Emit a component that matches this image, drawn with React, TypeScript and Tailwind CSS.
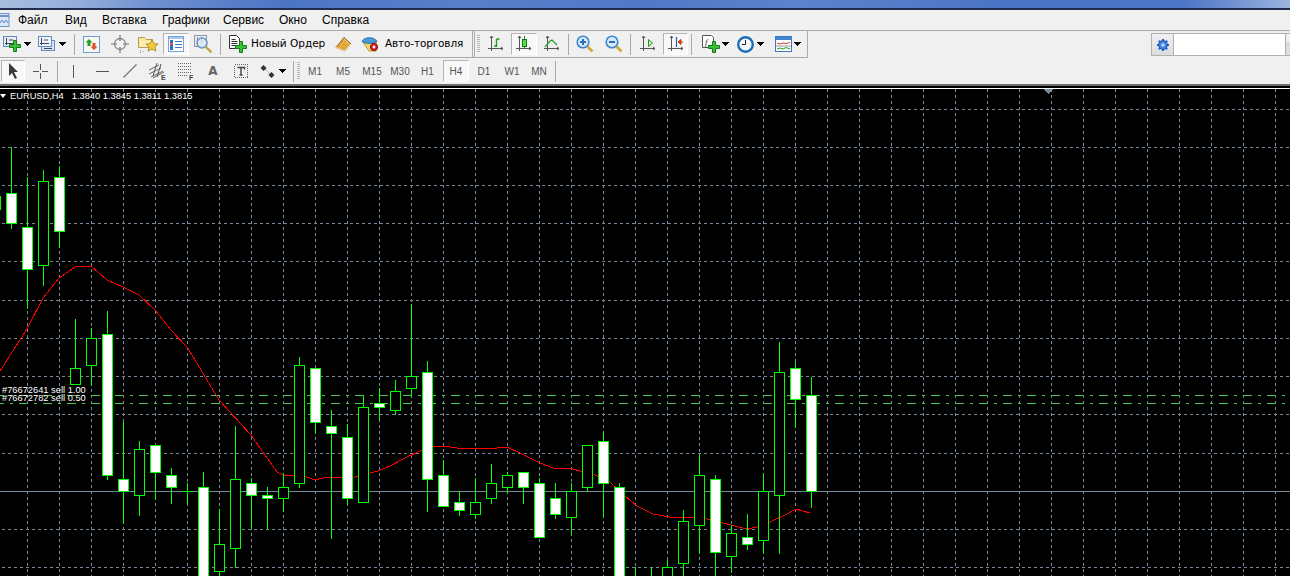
import React from "react";

type C = [number, number, number, number, number, number];
// x, wickTop, wickBottom, bodyTop, bodyBottom, filled
const candles: C[] = [
  [-5, 180, 230, 196, 209, 0],
  [11, 147, 228, 193, 223, 1],
  [27, 177, 308, 227, 269, 1],
  [43, 170, 285, 181, 265, 0],
  [59, 166, 247, 177, 231, 1],
  [75, 319, 384, 368, 384, 0],
  [91, 328, 385, 338, 365, 0],
  [107, 311, 479, 334, 475, 1],
  [123, 422, 523, 479, 491, 1],
  [139, 441, 515, 449, 495, 0],
  [155, 445, 499, 445, 472, 1],
  [171, 468, 503, 475, 487, 1],
  [203, 472, 580, 487, 580, 1],
  [219, 509, 580, 544, 571, 0],
  [235, 426, 567, 479, 548, 0],
  [251, 478, 528, 483, 495, 1],
  [267, 487, 529, 495, 498, 1],
  [283, 473, 511, 487, 498, 0],
  [299, 357, 487, 365, 483, 0],
  [315, 368, 433, 368, 422, 1],
  [331, 410, 538, 426, 433, 1],
  [347, 424, 504, 437, 498, 1],
  [363, 395, 502, 407, 502, 0],
  [379, 388, 419, 403, 407, 1],
  [395, 380, 414, 391, 410, 0],
  [411, 304, 395, 376, 388, 0],
  [427, 361, 511, 372, 479, 1],
  [443, 460, 506, 475, 506, 1],
  [459, 491, 515, 502, 510, 1],
  [475, 478, 518, 502, 514, 0],
  [491, 464, 503, 483, 498, 0],
  [507, 472, 493, 475, 487, 0],
  [523, 472, 503, 472, 487, 1],
  [539, 478, 537, 483, 537, 1],
  [555, 483, 518, 498, 514, 1],
  [571, 483, 534, 491, 517, 0],
  [587, 445, 491, 445, 487, 0],
  [603, 432, 517, 441, 483, 1],
  [619, 483, 580, 487, 580, 1],
  [667, 560, 580, 567, 580, 0],
  [683, 510, 580, 521, 563, 0],
  [699, 454, 553, 475, 525, 0],
  [715, 475, 580, 479, 552, 1],
  [731, 525, 572, 533, 556, 0],
  [747, 514, 549, 537, 544, 1],
  [763, 473, 553, 491, 540, 0],
  [779, 342, 553, 372, 495, 0],
  [795, 362, 427, 368, 399, 1],
  [811, 377, 507, 395, 491, 1],
];

const red =
  "0,371 7,360 27,329 43,298 59,278 75,267 91,266 107,280 123,287 139,295 155,310 171,330 187,347 195,360 219,400 251,435 277,472 283,475 292,475 307,477 315,480 323,478 330,477 340,477 355,477 370,473 378,471 390,466 403,459 420,451 433,447 443,446 457,448 497,448 507,447 520,453 540,463 553,468 573,469 580,471 593,474 610,482 625,496 637,506 653,514 670,517 687,518 693,517 707,519 727,524 747,529 757,527 770,522 787,514 796,509 810,513";

const hGrid = [109, 147, 185, 223, 261, 300, 338, 376, 414, 453, 529, 567];
const vGrid = Array.from({ length: 41 }, (_, i) => -5 + i * 32).filter((x) => x > 0);

function Chart() {
  return (
    <svg width="1290" height="488" viewBox="0 88 1290 488" className="block" shapeRendering="crispEdges">
      <rect x="0" y="88" width="1290" height="488" fill="#000" />
      <line x1="0" x2="1290" y1="88.5" y2="88.5" stroke="#fff" />
      {hGrid.map((y) => (
        <line key={y} x1="2" x2="1290" y1={y + 0.5} y2={y + 0.5} stroke="#778899" strokeDasharray="3 3" />
      ))}
      {vGrid.map((x) => (
        <line key={x} x1={x + 0.5} x2={x + 0.5} y1="89" y2="576" stroke="#778899" strokeDasharray="3 3" />
      ))}
      <line x1="0" x2="1290" y1="491.5" y2="491.5" stroke="#778899" />
      <line x1="0" x2="1285" y1="395.5" y2="395.5" stroke="#4fc84f" strokeDasharray="9 6 3 6" strokeDashoffset="5" />
      <line x1="0" x2="1285" y1="403.5" y2="403.5" stroke="#4fc84f" strokeDasharray="9 6 3 6" strokeDashoffset="5" />
      <polyline points={red} fill="none" stroke="#ff0000" strokeWidth="1" />
      <line x1="182" x2="193" y1="491.5" y2="491.5" stroke="#00ff00" />
      <line x1="187.5" x2="187.5" y1="483" y2="504" stroke="#00ff00" />
      {candles.map(([x, wt, wb, bt, bb, f]) => (
        <g key={x}>
          <line x1={x + 0.5} x2={x + 0.5} y1={wt} y2={wb + 1} stroke="#00ff00" />
          <rect x={x - 4.5} y={bt + 0.5} width="10" height={bb - bt} fill={f ? "#fff" : "#000"} stroke="#00ff00" />
        </g>
      ))}
      <line x1="635.5" x2="635.5" y1="567" y2="576" stroke="#00ff00" />
      <line x1="651.5" x2="651.5" y1="567" y2="576" stroke="#00ff00" />
      <path d="M1044 89h9l-4.500 5z" fill="#778899" />
    </svg>
  );
}

/* ---------- toolbar icons ---------- */
const Plus = ({ x, y }: { x: number; y: number }) => (
  <path
    transform={`translate(${x} ${y})`}
    d="M4.500 .5h3v4h4v3h-4v4h-3v-4h-4v-3h4z"
    fill="#35c235"
    stroke="#1a7a1a"
    strokeWidth="1"
  />
);
const Arrow = () => (
  <svg width="7" height="4" viewBox="0 0 7 4" shapeRendering="crispEdges">
    <path d="M0 0h7v1h-1v1h-1v1h-1v1h-1v-1h-1v-1h-1v-1h-1z" fill="#000" />
  </svg>
);
const Axes = () => (
  <path d="M4.500 1v15M1 13.500h15M3 3l1.500-2 1.500 2M14 12l2 1.500-2 1.500" fill="none" stroke="#555" strokeWidth="1" />
);

const S = ({ w = 18, h = 18, children }: { w?: number; h?: number; children: React.ReactNode }) => (
  <svg width={w} height={h} viewBox={`0 0 ${w} ${h}`} className="block shrink-0">
    {children}
  </svg>
);

const IconNewChart = () => (
  <S w={18} h={16}>
    <rect x=".5" y=".5" width="13" height="10" fill="#e6eef9" stroke="#5f8ac6" />
    <path d="M3.500 2v7M2 7.500h9M6 4h4" fill="none" stroke="#445" />
    <Plus x={6} y={4} />
  </S>
);
const IconProfile = () => (
  <S w={18} h={16}>
    <rect x="3.5" y="4.5" width="13" height="10" fill="#dbe6f6" stroke="#5f8ac6" />
    <rect x=".5" y=".5" width="13" height="10" fill="#eef3fb" stroke="#5f8ac6" />
    <path d="M3.500 2v7M2 7.500h9M6 4h4M6 12.500h8" fill="none" stroke="#445" />
  </S>
);
const IconMarket = () => (
  <S w={17} h={17}>
    <rect x=".5" y=".5" width="16" height="16" fill="#f7f7f2" stroke="#6f9ed0" />
    <path d="M6 3l3.500 3.500H7.500V10h-3V6.500H2.500z" fill="#28a028" />
    <path d="M11 14l-3.500-3.500h2V7h3v3.500h2z" fill="#e0502c" />
  </S>
);
const IconCross = () => (
  <S w={18} h={18}>
    <circle cx="9" cy="9" r="5.5" fill="none" stroke="#888" strokeWidth="1.300" />
    <path d="M9 0v6M9 12v6M0 9h6M12 9h6" stroke="#777" strokeWidth="1.200" />
  </S>
);
const IconFolderStar = () => (
  <S w={21} h={19}>
    <path d="M.5 2.500h6l2 2h6v8h-14z" fill="#f8e59c" stroke="#b89a50" />
    <path d="M2 6h12v6H2z" fill="#fbeeb8" />
    <path d="M14 4.500l1.900 4 4.300.5-3.200 2.900.9 4.300-3.900-2.200-3.900 2.200.9-4.300L7.800 9l4.300-.5z" fill="#f2c93a" stroke="#a88822" strokeWidth=".8" />
    <path d="M2.500 15v3M5 16v2" stroke="#999" strokeDasharray="1 1" />
  </S>
);
const IconNavigator = () => (
  <S w={16} h={16}>
    <rect x=".5" y=".5" width="15" height="15" fill="#fff" stroke="#7ca3d6" />
    <rect x="1" y="1" width="14" height="2" fill="#a9c6ec" />
    <rect x="2" y="4" width="3" height="10" fill="#2a6fc4" />
    <rect x="2" y="7" width="3" height="2" fill="#e25b3a" />
    <path d="M7 5.500h7M7 8.500h7M7 11.500h7" stroke="#3d78c6" />
  </S>
);
const IconTester = () => (
  <S w={20} h={19}>
    <rect x=".5" y=".5" width="12" height="11" fill="#e9edf2" stroke="#8a97a8" />
    <path d="M3.500 2v9M7.500 2v6" stroke="#8a8f98" />
    <circle cx="8" cy="8" r="5" fill="#d8e6f4" fillOpacity=".8" stroke="#6d95bf" strokeWidth="1.600" />
    <path d="M12 12l5.500 5.500" stroke="#c8a23c" strokeWidth="2.400" />
  </S>
);
const IconOrder = () => (
  <S w={18} h={18}>
    <path d="M.5 .5h7l3 3v10h-10z" fill="#fff" stroke="#333" />
    <path d="M2.500 4.500h4M2.500 6.500h6M2.500 8.500h6M2.500 10.500h4" stroke="#333" />
    <Plus x={6} y={6} />
  </S>
);
const IconBook = () => (
  <S w={17} h={15}>
    <path d="M9 .5l7 6.500-6.500 7L1 10.500z" fill="#e2a83c" stroke="#8a5f18" />
    <path d="M1 10.500l8.500 3.500L16 7" fill="none" stroke="#fff0c0" strokeWidth="1" />
    <path d="M9 2l5 4.800" stroke="#f7d890" />
  </S>
);
const IconAuto = () => (
  <S w={18} h={16}>
    <path d="M2 6l6 9h7V6z" fill="#f3d96c" stroke="#b8962c" />
    <path d="M1 5.500C3 1 13 0 16 5.500 12 8 5 8 1 5.500z" fill="#4b9ad6" stroke="#2a6ba8" />
    <circle cx="13" cy="11" r="3.600" fill="#e02020" stroke="#8a1010" />
    <circle cx="13" cy="11" r="1.400" fill="#fff" />
  </S>
);
const IconBars = () => (
  <S>
    <Axes />
    <path d="M9.500 4v8M9.500 4h3M9.500 11H7" fill="none" stroke="#1f9a1f" strokeWidth="1.400" />
  </S>
);
const IconCandle = () => (
  <S>
    <Axes />
    <path d="M9.500 1v12" stroke="#159015" />
    <rect x="7.500" y="4.500" width="4" height="7" fill="#54e054" stroke="#107a10" />
  </S>
);
const IconLine = () => (
  <S>
    <Axes />
    <path d="M2 12l5-6 2-1 5 5" fill="none" stroke="#2aa02a" strokeWidth="1.300" />
  </S>
);
const IconZoom = ({ minus }: { minus?: boolean }) => (
  <S w={18} h={18}>
    <circle cx="7" cy="7" r="5.800" fill="#d6e9fa" stroke="#3d86c8" strokeWidth="1.600" />
    <path d={minus ? "M4 7h6" : "M4 7h6M7 4v6"} stroke="#2d6cb0" strokeWidth="2" />
    <path d="M11.500 11.500l5 5" stroke="#d2a838" strokeWidth="2.600" />
  </S>
);
const IconShift = () => (
  <S>
    <Axes />
    <path d="M9.500 4.500l4 3.500-4 3.500z" fill="#c8f0c8" stroke="#1f9a1f" />
  </S>
);
const IconAutoScroll = () => (
  <S>
    <Axes />
    <path d="M9.500 2v10" stroke="#1f5fb0" strokeWidth="1.200" />
    <path d="M16 7h-3M11 7l3-2.500v5z" fill="#c83c14" stroke="#c83c14" />
  </S>
);
const IconIndicator = () => (
  <S w={18} h={18}>
    <path d="M.5 .5h9l2 2v10H.5z" fill="#fff" stroke="#555" />
    <text x="3" y="9.5" fontSize="9" fontFamily="Liberation Serif" fontStyle="italic" fill="#333">f</text>
    <Plus x={6} y={6} />
  </S>
);
const IconClock = () => (
  <S w={17} h={17}>
    <circle cx="8.5" cy="8.5" r="7.300" fill="#f4f8fc" stroke="#1e6db8" strokeWidth="2.400" />
    <path d="M8.500 4v4.500H5" fill="none" stroke="#222" />
  </S>
);
const IconTemplate = () => (
  <S w={17} h={16}>
    <rect x=".5" y=".5" width="16" height="15" fill="#fff" stroke="#3a7abf" />
    <rect x="1" y="1" width="15" height="3" fill="#3f86cf" />
    <path d="M2 7l3 1 3-1 3 .5 4-1" fill="none" stroke="#c84030" />
    <path d="M1 10h15" stroke="#9a9a9a" />
    <path d="M2 13l3-1 3 1 3-1.500 4 1.500" fill="none" stroke="#2a9a2a" />
  </S>
);
const IconCursor = () => (
  <S w={11} h={16}>
    <path d="M1 0l9 9H6l3 6-2 1-3-6-3 3z" fill="#3a3a3a" />
  </S>
);
const IconThinCross = () => (
  <S w={15} h={15}>
    <path d="M7.500 0v6M7.500 9v6M0 7.500h6M9 7.500h6" stroke="#555" shapeRendering="crispEdges" />
  </S>
);
const IconV = () => (
  <S w={3} h={13}>
    <path d="M1.500 0v13" stroke="#555" shapeRendering="crispEdges" />
  </S>
);
const IconH = () => (
  <S w={13} h={3}>
    <path d="M0 1.500h13" stroke="#555" shapeRendering="crispEdges" />
  </S>
);
const IconTrend = () => (
  <S w={14} h={14}>
    <path d="M.5 13.500l13-13" stroke="#777" strokeWidth="1.200" />
  </S>
);
const IconFibo = () => (
  <S w={17} h={17}>
    <path d="M0 7l10-5M0 11l12-6M2 14l12-6M4 15L15 9" stroke="#666" />
    <path d="M4 13l4-13M8 14l4-13" stroke="#555" />
    <text x="12" y="17" fontSize="7" fontWeight="700" fontFamily="Liberation Sans" fill="#444">E</text>
  </S>
);
const IconFib = () => (
  <S w={17} h={17}>
    <path d="M.5 .5h14M.5 3.500h14M.5 6.500h14M.5 9.500h14M.5 12.500h10" stroke="#666" strokeDasharray="1 1" shapeRendering="crispEdges" />
    <text x="12" y="17" fontSize="7" fontWeight="700" fontFamily="Liberation Sans" fill="#444">F</text>
  </S>
);
const IconT = () => (
  <S w={14} h={14}>
    <rect x=".5" y=".5" width="13" height="13" fill="none" stroke="#666" strokeDasharray="1 1" shapeRendering="crispEdges" />
    <path d="M3.500 3.500h7v2M7 3.500v7.500M5.500 11h3" fill="none" stroke="#444" strokeWidth="1.400" />
  </S>
);
const IconShapes = () => (
  <S w={15} h={13}>
    <path d="M3.500 0l3 3-3 3-3-3zM11.500 7l3 3-3 3-3-3z" fill="#333" />
    <path d="M5 4l5 5" stroke="#777" strokeDasharray="1 1" />
  </S>
);
const IconGear = () => (
  <S w={14} h={14}>
    <path d="M7 1v12M1 7h12M2.800 2.800l8.400 8.400M11.200 2.800l-8.400 8.400" stroke="#2a6ad0" strokeWidth="2.200" />
    <circle cx="7" cy="7" r="4.400" fill="#3e84e0" stroke="#1f55b0" />
    <circle cx="7" cy="7" r="1.800" fill="#bcd6f6" />
  </S>
);

/* ---------- toolbar parts ---------- */
const Btn = ({ className = "", children }: { className?: string; children?: React.ReactNode }) => (
  <div className={`flex h-full shrink-0 items-center justify-center ${className}`}>{children}</div>
);
const Selected = ({ className = "", children }: { className?: string; children?: React.ReactNode }) => (
  <div className={`flex h-[22px] shrink-0 items-center justify-center border border-b-white border-l-[#b4b4b4] border-r-white border-t-[#b4b4b4] bg-[#f8f8f8] ${className}`}>
    {children}
  </div>
);
const Sep = ({ className = "" }: { className?: string }) => (
  <div className={`flex h-full shrink-0 items-center justify-center ${className}`}>
    <div className="h-[21px] w-px bg-[#a8a8a8]" />
  </div>
);
const Grip = () => (
  <div className="flex h-full w-[4px] shrink-0 items-center">
    <div className="h-[18px] w-[3px] bg-[repeating-linear-gradient(to_bottom,#b8b8b8_0,#b8b8b8_1px,#f0f0f0_1px,#f0f0f0_2px)]" />
  </div>
);
const Tf = ({ className = "", children }: { className?: string; children: React.ReactNode }) => (
  <Btn className={`text-[10px] text-[#555] ${className}`}>{children}</Btn>
);

export default function App() {
  return (
    <div className="h-[588px] w-[1300px] overflow-hidden bg-white">
      <div className="flex h-[576px] w-[1290px] flex-col overflow-hidden bg-[#f0f0f0] font-['Liberation_Sans',sans-serif] text-black">
        {/* title strip */}
        <div className="h-[8px] shrink-0 bg-[linear-gradient(90deg,#a9bedf_0,#94aedb_6%,#6f8fd0_12%,#4b74c4_22%,#5a7fca_36%,#4f78c6_50%,#5c84cc_62%,#4a73c4_78%,#4e76c6_92%,#7f9dd6_97%,#9db4e0_100%)]" />
        <div className="h-[2px] shrink-0 bg-[#1f2c4e]" />

        {/* menu */}
        <div className="flex h-[20px] shrink-0 items-center text-[12px]">
          <div className="flex w-[18px] shrink-0 items-center">
            <svg width="10" height="14" viewBox="0 0 10 14">
              <rect x="-4" y=".5" width="13" height="13" fill="#dce8f8" stroke="#6a94cc" />
              <path d="M-3 3h12" stroke="#6a94cc" strokeWidth="2" />
              <path d="M0 10l2-3 2 3 2-3 2 3" fill="none" stroke="#5a86c0" />
            </svg>
          </div>
          <span className="w-[47px]">Файл</span>
          <span className="w-[37px]">Вид</span>
          <span className="w-[60px]">Вставка</span>
          <span className="w-[61px]">Графики</span>
          <span className="w-[56px]">Сервис</span>
          <span className="w-[43px]">Окно</span>
          <span>Справка</span>
        </div>

        {/* row 1 */}
        <div className="flex h-[28px] shrink-0 items-stretch justify-between border-t border-[#ababab]">
          <div className="flex h-[27px] w-[808px] shrink-0 items-center border-b border-r border-[#ababab]">
            <Btn className="w-[33px] gap-[3px]"><IconNewChart /><Arrow /></Btn>
            <Btn className="w-[37px] gap-[3px] pl-[1px]"><IconProfile /><Arrow /></Btn>
            <Sep className="w-[8px]" />
            <Btn className="w-[26px]"><IconMarket /></Btn>
            <Btn className="w-[32px]"><IconCross /></Btn>
            <Btn className="w-[24px]"><IconFolderStar /></Btn>
            <div className="w-[3px] shrink-0" />
            <Selected className="w-[26px]"><IconNavigator /></Selected>
            <Btn className="w-[30px]"><IconTester /></Btn>
            <Sep className="w-[3px]" />
            <Btn className="w-[103px] justify-start gap-[4px] pl-[7px]">
              <IconOrder />
              <span className="whitespace-nowrap font-['DejaVu_Sans',sans-serif] text-[10.500px]">Новый Ордер</span>
            </Btn>
            <div className="w-[6px] shrink-0" />
            <Btn className="w-[24px]"><IconBook /></Btn>
            <Btn className="w-[30px]"><IconAuto /></Btn>
            <Btn className="w-[84px] justify-start">
              <span className="whitespace-nowrap font-['DejaVu_Sans',sans-serif] text-[10.500px] tracking-[-0.15px]">Авто-торговля</span>
            </Btn>
            <div className="flex h-full w-[8px] shrink-0 items-center gap-px pl-[3px]">
              <div className="h-full w-px bg-[#ababab]" />
              <div className="h-full w-px bg-[#ababab]" />
            </div>
            <Grip />
            <Btn className="w-[29px]"><IconBars /></Btn>
            <div className="w-px shrink-0" />
            <Selected className="w-[26px]"><IconCandle /></Selected>
            <Btn className="w-[30px]"><IconLine /></Btn>
            <Sep className="w-[3px]" />
            <Btn className="w-[30px]"><IconZoom /></Btn>
            <Btn className="w-[27px]"><IconZoom minus /></Btn>
            <Sep className="w-[7px]" />
            <Btn className="w-[28px]"><IconShift /></Btn>
            <div className="w-px shrink-0" />
            <Selected className="w-[25px]"><IconAutoScroll /></Selected>
            <Sep className="w-[7px]" />
            <Btn className="w-[38px] gap-[2px] pl-[3px]"><IconIndicator /><Arrow /></Btn>
            <Btn className="w-[35px] gap-[3px]"><IconClock /><Arrow /></Btn>
            <Btn className="w-[37px] gap-[2px] pl-[3px]"><IconTemplate /><Arrow /></Btn>
          </div>
          <div className="mt-[2px] flex h-[23px] w-[139px] shrink-0 border border-r-0 border-[#b0b0b0]">
            <div className="flex w-[22px] shrink-0 items-center justify-center border-r border-[#b0b0b0] bg-[linear-gradient(#f0f0f0,#dcdcdc)]">
              <IconGear />
            </div>
            <div className="w-[112px] shrink-0 border-r border-[#b0b0b0] bg-white" />
            <div className="flex-1 bg-[linear-gradient(#f0f0f0_40%,#dcdcdc_40%)]" />
          </div>
        </div>

        {/* row 2 */}
        <div className="flex h-[26px] shrink-0 items-center">
          <Selected className="ml-px w-[24px]"><IconCursor /></Selected>
          <Btn className="w-[30px]"><IconThinCross /></Btn>
          <Sep className="w-[5px]" />
          <Btn className="w-[26px]"><IconV /></Btn>
          <Btn className="w-[32px]"><IconH /></Btn>
          <Btn className="w-[24px]"><IconTrend /></Btn>
          <Btn className="w-[30px]"><IconFibo /></Btn>
          <Btn className="w-[26px]"><IconFib /></Btn>
          <Btn className="w-[30px] font-['DejaVu_Sans',sans-serif] text-[12px] font-bold text-[#666]">A</Btn>
          <Btn className="w-[26px]"><IconT /></Btn>
          <Btn className="w-[36px] gap-[4px] pl-[2px]"><IconShapes /><Arrow /></Btn>
          <Sep className="w-[7px]" />
          <Grip />
          <Tf className="w-[28px]">M1</Tf>
          <Tf className="w-[28px]">M5</Tf>
          <Tf className="w-[30px]">M15</Tf>
          <Tf className="w-[26px]">M30</Tf>
          <Tf className="w-[29px]">H1</Tf>
          <div className="w-px shrink-0" />
          <Selected className="w-[26px] text-[10px] text-[#555]">H4</Selected>
          <Tf className="w-[30px]">D1</Tf>
          <Tf className="w-[26px]">W1</Tf>
          <Tf className="w-[28px]">MN</Tf>
          <Sep className="w-[5px]" />
        </div>

        <div className="h-[2px] shrink-0 bg-[#6e6e6e]" />
        <div className="h-[2px] shrink-0 bg-black" />

        {/* chart */}
        <div className="relative h-[488px] shrink-0 overflow-hidden">
          <Chart />
          <div className="absolute left-0 top-[2px] flex items-center whitespace-nowrap text-[9.300px] leading-[12px] text-white">
            <svg width="6" height="4" viewBox="0 0 6 4" className="mr-[4px]">
              <path d="M0 0h6L3 4z" fill="#fff" />
            </svg>
            <span className="mr-[8px]">EURUSD,H4</span>
            <span>1.3840 1.3845 1.3811 1.3815</span>
          </div>
          <div className="absolute left-[2px] top-[298px] whitespace-nowrap text-[9.300px] leading-[8px] text-white">
            <div>#76672641 sell 1.00</div>
            <div>#76672782 sell 0.50</div>
          </div>
        </div>
      </div>
    </div>
  );
}
